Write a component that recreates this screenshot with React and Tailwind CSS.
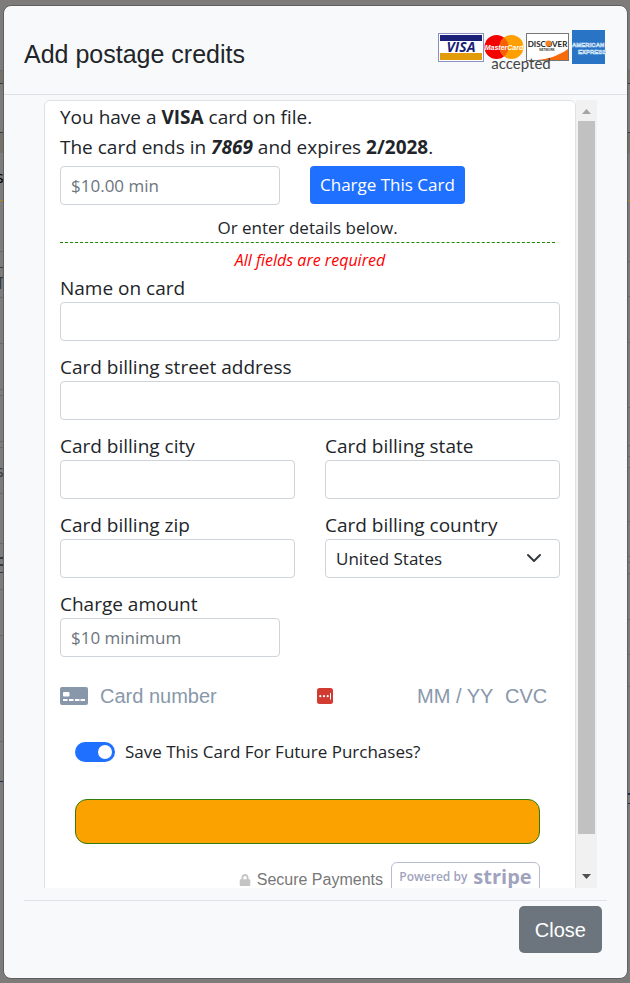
import { useState } from 'react'
import { FaLock } from 'react-icons/fa'

const BODY_FONT = "font-['Segoe_UI','Open_Sans','Noto_Sans',sans-serif]"
const UI_FONT = "font-['Liberation_Sans',Arial,sans-serif]"

const INPUT = 'block w-full h-[39px] rounded border border-[#ced4da] bg-white px-2.5 text-[17px] text-[#212529] placeholder:text-[#6c757d]'

// Rows of the dimmed page that peek out on both sides of the dialog
const LEFT_ROWS = [
  { box: 'h-[71px] border-b border-[#6a6a68]' },
  { box: 'h-[13px] border-b border-[#3c3c3a] bg-[#74726b]' },
  { box: 'h-[49px] border-b border-[#3c3c3a]' },
  { box: 'h-5 bg-[#74726b]' },
  { box: 'h-12 border-b border-[#b08a10] text-black', mark: 's' },
  { box: 'h-[51px] border-b border-[#6a6a68]' },
  { box: 'h-4 border-b border-[#3c3c3a]' },
  { box: 'h-[30px] border-b border-[#6a6a68] text-[#343a40]', mark: 'T' },
  { box: 'h-[46px] border-b border-[#6a6a68]' },
  { box: 'h-[46px] border-b border-[#6a6a68]' },
  { box: 'h-[6px] border-b border-[#6a6a68]' },
  { box: 'h-[46px] border-b border-[#6a6a68]' },
  { box: 'h-[6px] border-b border-[#6a6a68]' },
  { box: 'h-[46px] border-b border-[#6a6a68] text-[#343a40]', mark: 's' },
  { box: 'h-[50px] border-b border-[#6a6a68]' },
  { box: 'h-[15px] border-b-2 border-[#343a40]' },
  { box: 'h-[7px] border-b-2 border-[#343a40]' },
  { box: 'h-[7px] border-b border-[#343a40]' },
  { box: 'h-[17px] border-b border-[#6a6a68]' },
  { box: 'h-[46px] border-b border-[#6a6a68]' },
  { box: 'h-[106px] border-b border-[#6a6a68]' },
  { box: 'h-[40px] border-b border-[#142f57]' },
]

const RIGHT_ROWS = [
  { box: 'h-[71px] border-b border-[#6a6a68]' },
  { box: 'h-[13px] border-b border-[#3c3c3a] bg-[#74726b]' },
  { box: 'h-[49px] border-b border-[#3c3c3a]' },
  { box: 'h-5 bg-[#74726b]' },
  { box: 'h-12 border-b border-[#b08a10]' },
  { box: 'h-[61px] border-b border-[#6a6a68]' },
  { box: 'h-[35px] border-b border-[#6a6a68]' },
  { box: 'h-[46px] border-b border-[#6a6a68]' },
  { box: 'h-[65px] border-b border-[#6a6a68]' },
  { box: 'h-[38px] border-b border-[#6a6a68]' },
  { box: 'h-[11px] border-b border-[#6a6a68]' },
  { box: 'h-[11px] border-b border-[#6a6a68]' },
  { box: 'h-[54px] border-b border-[#6a6a68]' },
  { box: 'h-[35px] border-b border-[#6a6a68]' },
  { box: 'h-[6px] border-b border-[#6a6a68]' },
  { box: 'h-[11px] border-b border-[#6a6a68]' },
  { box: 'h-[46px] border-b border-[#6a6a68]' },
  { box: 'h-[35px] border-b border-[#6a6a68]' },
  { box: 'h-8 border-b border-[#6a6a68]' },
  { box: 'h-[108px] border-b-2 border-[#142f57]' },
  { box: 'h-[9px] border-b border-[#142f57]' },
]

function PageEdge({ rows, side }) {
  return (
    <div className={`absolute inset-y-0 w-2 overflow-hidden ${side}`} aria-hidden="true">
      {rows.map((row, i) => (
        <div key={i} className={`flex items-center text-base leading-none ${row.box}`}>
          {row.mark && <span className="-ml-1">{row.mark}</span>}
        </div>
      ))}
    </div>
  )
}

function AcceptedCards() {
  return (
    <svg width="168" height="43" viewBox="0 0 168 43" role="img" aria-label="Accepted cards" className={`shrink-0 ${UI_FONT}`}>
      {/* Visa */}
      <rect x="0.5" y="3.5" width="45" height="28" fill="#fff" stroke="#8d8fc0" />
      <rect x="2" y="5" width="42" height="6" fill="#1a1f78" />
      <rect x="2" y="23" width="42" height="7" fill="#e29c0a" />
      <text x="23" y="22" textAnchor="middle" fontSize="14" fontWeight="bold" fontStyle="italic" fontFamily="Open Sans, sans-serif" fill="#1a1f78">VISA</text>

      {/* MasterCard */}
      <circle cx="58.5" cy="17" r="12" fill="#f40000" />
      <circle cx="73.5" cy="17" r="12" fill="#ff9f00" />
      <path d="M66 7.6a12 12 0 0 1 0 18.8a12 12 0 0 1 0-18.8z" fill="#f86008" />
      <text x="66" y="19.5" textAnchor="middle" fontSize="7" fontWeight="bold" fontStyle="italic" fill="#fff">MasterCard</text>

      {/* Discover */}
      <rect x="88.5" y="3.5" width="42" height="27" fill="#fff" stroke="#777" />
      <path d="M130 19v11H99c12-1 23-5 31-11z" fill="#f76b0c" />
      <text x="109.5" y="16.5" textAnchor="middle" fontSize="8" fontWeight="bold" fontFamily="Lato, sans-serif" fill="#222">DISCOVER</text>
      <circle cx="110.5" cy="13.5" r="3" fill="#f58220" />
      <text x="109" y="21" textAnchor="middle" fontSize="3" fontWeight="bold" fill="#333">NETWORK</text>

      {/* American Express */}
      <rect x="134" y="0" width="33" height="34" fill="#2a74c5" />
      <text x="134" y="16.5" fontSize="6" fontWeight="bold" fill="#2a74c5" stroke="#d5e6f8" strokeWidth="0.6">AMERICAN</text>
      <text x="140" y="23.5" fontSize="6" fontWeight="bold" fill="#2a74c5" stroke="#d5e6f8" strokeWidth="0.6">EXPRESS</text>

      <text x="83" y="39" textAnchor="middle" fontSize="15" fill="#444" fontFamily="Lato, sans-serif">accepted</text>
    </svg>
  )
}

function Field({ id, label, className = '', children }) {
  return (
    <div className={className}>
      <label htmlFor={id} className="block text-[19px] leading-7">{label}</label>
      {children ?? <input id={id} type="text" className={INPUT} />}
    </div>
  )
}

function CardRow() {
  const field = 'bg-transparent text-xl text-[#8898aa] placeholder:text-[#8898aa]'

  return (
    <div className={`mt-[23px] flex h-8 items-center ${UI_FONT}`}>
      <svg width="28" height="18" viewBox="0 0 28 18" className="shrink-0" aria-hidden="true">
        <rect width="28" height="18" rx="2" fill="#8898aa" />
        <rect x="3" y="5" width="6.5" height="4.5" rx="1" fill="#fff" />
        <path d="M3 13h4.500M9 13h4.500M15 13h4.500M20.500 13h4.500" stroke="#fff" strokeWidth="1.8" />
      </svg>
      <input aria-label="Card number" placeholder="Card number" className={`ml-3 w-0 flex-1 ${field}`} />
      <svg width="16" height="16" viewBox="0 0 16 16" className="mr-[84px] shrink-0" aria-hidden="true">
        <rect width="16" height="16" rx="2.5" fill="#d23b31" />
        <circle cx="3.3" cy="8.2" r="1.1" fill="#fff" />
        <circle cx="7" cy="8.2" r="1.1" fill="#fff" />
        <circle cx="10.7" cy="8.2" r="1.1" fill="#fff" />
        <path d="M13.500 5v6.500" stroke="#fff" />
      </svg>
      <input aria-label="Expiry date" placeholder="MM / YY" className={`w-[88px] ${field}`} />
      <input aria-label="CVC" placeholder="CVC" className={`w-[55px] ${field}`} />
    </div>
  )
}

function StripeBadge() {
  return (
    <a href="#stripe" className="flex h-9 w-[149px] items-center justify-center gap-1.5 rounded-md border border-[#b9bccf] pb-1.5 font-['Open_Sans',sans-serif] font-bold text-[#a0a3bd]">
      <span className="text-xs font-semibold">Powered by</span>
      <span className="text-xl leading-none">stripe</span>
    </a>
  )
}

function Scrollbar() {
  return (
    <div className="flex w-[21px] shrink-0 flex-col items-center bg-[#f1f1f1]" aria-hidden="true">
      <svg width="17" height="21" viewBox="0 0 17 21" className="shrink-0">
        <path d="M4 14l4.500-5 4.500 5z" fill="#a3a3a3" />
      </svg>
      <div className="w-[17px] flex-[713] bg-[#c1c1c1]" />
      <div className="flex-[33]" />
      <svg width="17" height="21" viewBox="0 0 17 21" className="shrink-0">
        <path d="M4 7l4.500 5 4.500-5z" fill="#505050" />
      </svg>
    </div>
  )
}

export default function App() {
  const [saveCard, setSaveCard] = useState(true)

  return (
    <div className={`relative h-screen bg-[#7d7c7a] pt-[5px] pr-0.5 pb-1 pl-[3px] text-[#212529] ${BODY_FONT}`}>
      <PageEdge rows={LEFT_ROWS} side="left-0" />
      <PageEdge rows={RIGHT_ROWS} side="right-0" />

      <div role="dialog" aria-labelledby="dialog-title" className="relative flex h-full flex-col rounded-lg border border-[#5f5f5f] bg-[#f8f9fb]">
        <header className="flex h-[89px] shrink-0 items-start justify-between border-b border-[#dee2e6] pt-6 pr-[21px] pl-5">
          <h1 id="dialog-title" className={`pt-2 text-[25px] leading-8 ${UI_FONT}`}>Add postage credits</h1>
          <AcceptedCards />
        </header>

        <div className="mt-[5px] mr-[30px] ml-10 flex min-h-0 flex-1 overflow-hidden">
          <form className="min-w-0 flex-1 self-start rounded-md border border-[#dee2e6] bg-white px-[15px] pt-px pb-10" onSubmit={(e) => e.preventDefault()}>
            <p className="text-[19px] leading-[30px]">
              You have a <strong>VISA</strong> card on file.
              <br />
              The card ends in <strong><em>7869</em></strong> and expires <strong>2/2028</strong>.
            </p>

            <div className="mt-1 flex gap-[30px]">
              <div className="w-[220px]">
                <input aria-label="Amount to charge" placeholder="$10.00 min" className={INPUT} />
              </div>
              <button type="button" className="h-[38px] rounded bg-[#1f70ff] px-2.5 text-[17px] text-white">
                Charge This Card
              </button>
            </div>

            <div className="mt-[9px] mr-[5px] border-b border-dashed border-[#1f8a00] text-center text-[17px] leading-7">
              Or enter details below.
            </div>
            <p className="pt-1 text-center text-base leading-[27px] text-[#f00] italic">All fields are required</p>

            <div className="grid grid-cols-2 gap-x-[30px] gap-y-3">
              <Field id="name" label="Name on card" className="col-span-2" />
              <Field id="street" label="Card billing street address" className="col-span-2" />
              <Field id="city" label="Card billing city" />
              <Field id="state" label="Card billing state" />
              <Field id="zip" label="Card billing zip" />
              <Field id="country" label="Card billing country">
                <div className="relative">
                  <select id="country" className={`appearance-none ${INPUT}`}>
                    <option>United States</option>
                  </select>
                  <svg width="16" height="16" viewBox="0 0 16 16" className="pointer-events-none absolute top-[11px] right-[18px]" fill="none" aria-hidden="true">
                    <path d="M2 5l6 6 6-6" stroke="#343a40" strokeWidth="2" strokeLinecap="round" strokeLinejoin="round" />
                  </svg>
                </div>
              </Field>
            </div>

            <Field id="amount" label="Charge amount" className="mt-3 w-[220px]">
              <input id="amount" placeholder="$10 minimum" className={INPUT} />
            </Field>

            <CardRow />

            <div className="px-[15px] pr-5">
              <div className="mt-[26px] flex h-7 items-center gap-2.5">
                <input
                  id="save-card"
                  type="checkbox"
                  role="switch"
                  checked={saveCard}
                  onChange={(e) => setSaveCard(e.target.checked)}
                  className="h-5 w-10 appearance-none rounded-full bg-gray-300 before:m-[3px] before:block before:size-3.5 before:rounded-full before:bg-white checked:bg-[#1f70ff] checked:before:ml-[23px]"
                />
                <label htmlFor="save-card" className="text-[17px]">Save This Card For Future Purchases?</label>
              </div>

              <button type="submit" aria-label="Pay" className="mt-[33px] block h-[45px] w-full rounded-xl border border-[#2e7d0e] bg-[#fba200]" />

              <div className={`mt-[18px] flex justify-end gap-2 text-base text-[#777] ${UI_FONT}`}>
                <span className="flex h-9 items-center gap-1.5">
                  <FaLock className="size-3 text-[#c4c4c4]" />
                  Secure Payments
                </span>
                <StripeBadge />
              </div>
            </div>
          </form>

          <Scrollbar />
        </div>

        <footer className="mx-5 mt-3 flex h-[78px] shrink-0 items-start justify-end border-t border-[#dee2e6] pt-[5px] pr-[5px]">
          <button type="button" className={`h-[47px] rounded-[5px] bg-[#6c757d] px-4 text-xl text-white ${UI_FONT}`}>Close</button>
        </footer>
      </div>
    </div>
  )
}
